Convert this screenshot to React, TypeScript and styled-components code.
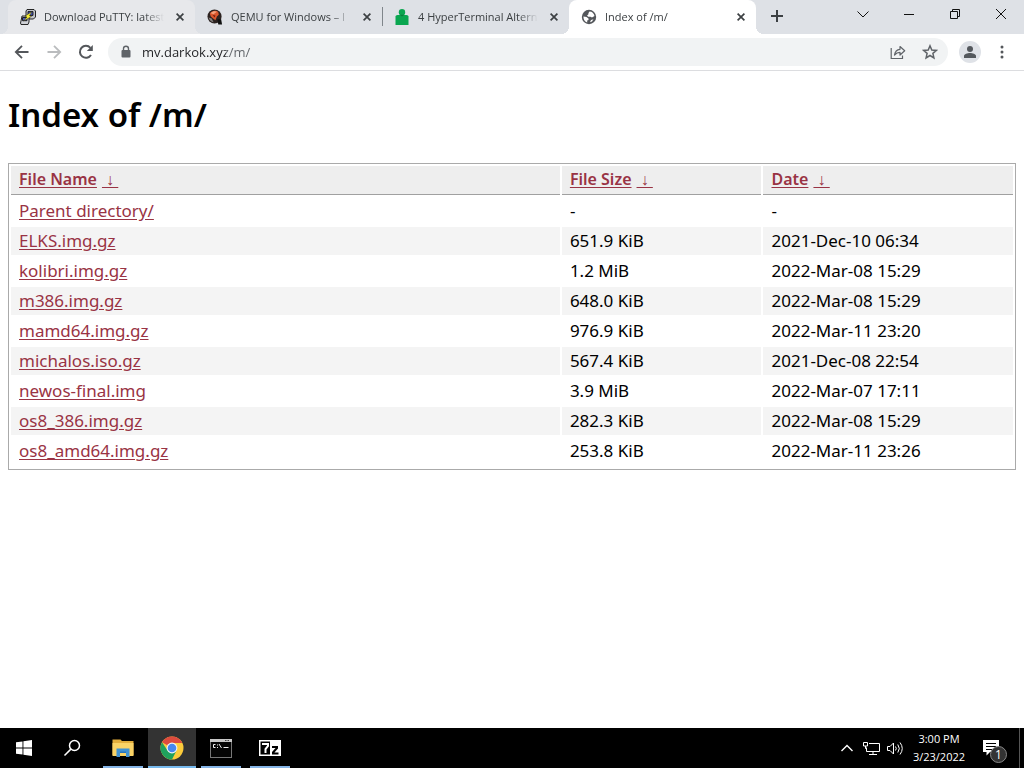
import React from "react";
import styled, { createGlobalStyle, css } from "styled-components";

const GlobalStyle = createGlobalStyle`
  *, *::before, *::after { box-sizing: border-box; }
  body { margin: 0; background: #fff; }
  button { border: 0; padding: 0; background: none; color: inherit; font: inherit; }
  svg { display: block; flex: none; }
`;

const uiFont = css`
  font-family: "Open Sans", "Noto Sans", sans-serif;
`;

const Screen = styled.div`
  display: flex;
  flex-direction: column;
  min-height: 100vh;
`;

const TabStrip = styled.header`
  ${uiFont}
  display: flex;
  height: 34px;
  padding-left: 8px;
  background: #dee1e6;
  color: #3c4043;
`;

const Tab = styled.div<{ $tone?: "active" | "hover"; $divider?: boolean }>`
  position: relative;
  display: flex;
  align-items: center;
  flex: 0 1 187px;
  min-width: 0;
  padding: 0 7px 0 12px;
  border-radius: 8px 8px 0 0;
  font-size: 12px;
  --tone: ${(p) => (p.$tone === "active" ? "#ffffff" : p.$tone === "hover" ? "#e7e8eb" : "transparent")};
  background: var(--tone);

  &::before,
  &::after {
    content: "";
    position: absolute;
    bottom: 0;
    width: 8px;
    height: 8px;
  }
  &::before {
    left: -8px;
    background: radial-gradient(circle at 0 0, transparent 8px, var(--tone) 8px);
  }
  &::after {
    right: -8px;
    background: radial-gradient(circle at 100% 0, transparent 8px, var(--tone) 8px);
  }
  ${(p) =>
    p.$divider &&
    css`
      &::before {
        left: 0;
        bottom: 8px;
        width: 1px;
        height: 19px;
        background: #80868b;
      }
    `}
`;

const TabButton = styled.button`
  display: flex;
  align-items: center;
  gap: 8px;
  flex: 1;
  min-width: 0;
  height: 34px;
  text-align: left;
`;

const TabTitle = styled.span`
  flex: 1;
  min-width: 0;
  overflow: hidden;
  white-space: nowrap;
  font-size: 11px;
  line-height: 16px;
  mask-image: linear-gradient(to right, #000 calc(100% - 20px), transparent);
`;

const IconButton = styled.button<{ $w?: number; $h?: number }>`
  display: flex;
  align-items: center;
  justify-content: center;
  flex: none;
  width: ${(p) => p.$w ?? 32}px;
  height: ${(p) => p.$h ?? 32}px;
`;

const CloseTab = styled(IconButton)`
  margin-left: 8px;
`;

const NewTab = styled(IconButton)`
  margin-left: 5px;
`;

const WindowControls = styled.div`
  display: flex;
  margin-left: auto;
  color: #111;
`;

const Toolbar = styled.nav`
  ${uiFont}
  display: flex;
  align-items: center;
  height: 37px;
  padding: 0 6px;
  border-bottom: 1px solid #dcdde0;
  background: #fff;
  color: #5f6368;
`;

const Omnibox = styled.form`
  display: flex;
  align-items: center;
  flex: 1;
  height: 28px;
  margin: 0 6px;
  padding: 0 2px 0 12px;
  border-radius: 14px;
  background: #f1f3f4;
`;

const Address = styled.input`
  flex: 1;
  min-width: 0;
  height: 28px;
  margin-left: 10px;
  padding: 0;
  border: 0;
  outline: 0;
  font: 13px/20px "Open Sans", "Noto Sans", sans-serif;
  color: transparent;
  background: linear-gradient(to right, #202124 84px, #5f6368 84px);
  background-clip: text;
`;

const Avatar = styled.button`
  display: flex;
  align-items: center;
  justify-content: center;
  width: 22px;
  height: 22px;
  margin: 0 5px;
  border-radius: 50%;
  background: #dfe2e7;
`;

const Page = styled.main`
  flex: 1;
  padding: 22px 8px;
  font-family: "Noto Sans", "Open Sans", sans-serif;
  font-size: 17px;
  color: #000;
`;

const Heading = styled.h1`
  margin: 0 0 26px;
  font-size: 33px;
  font-weight: 600;
  line-height: 44px;
`;

const Listing = styled.table`
  width: 100%;
  padding-bottom: 2px;
  table-layout: fixed;
  border: 1px solid #aaa;
  border-spacing: 2px;
  border-collapse: separate;
  line-height: 28px;
  a {
    color: #993344;
    text-underline-offset: 2px;
  }
`;

const HeadCell = styled.th<{ $width: string }>`
  width: ${(p) => p.$width};
  padding: 0 8px 2px;
  border-bottom: 1px solid #a0a0a0;
  background: #eee;
  text-align: left;
  font-size: 16px;
  font-weight: 600;
  line-height: 26px;
  a + a {
    margin-left: 5px;
    font-weight: 400;
    white-space: pre;
  }
`;

const Row = styled.tr`
  &:nth-child(even) td {
    background: #f4f4f4;
  }
`;

const Cell = styled.td`
  height: 28px;
  padding: 0 8px;
  white-space: nowrap;
`;

const Taskbar = styled.footer`
  ${uiFont}
  display: flex;
  height: 40px;
  background: #000;
  color: #fff;
`;

const TaskButton = styled(IconButton)<{ $running?: boolean; $focused?: boolean }>`
  background: ${(p) =>
    p.$focused
      ? "linear-gradient(#76b9ed, #76b9ed) bottom / 100% 2px no-repeat, #333"
      : p.$running
        ? "linear-gradient(#85b4e6, #85b4e6) bottom / 40px 2px no-repeat"
        : "none"};
`;

const RunningApps = styled.div`
  display: flex;
  gap: 1px;
  margin-left: 3px;
`;

const Tray = styled.div`
  display: flex;
  align-items: center;
  margin-left: auto;
`;

const Clock = styled.time`
  width: 64px;
  font-size: 11px;
  line-height: 18px;
  text-align: center;
`;

const NoticeButton = styled(IconButton)`
  position: relative;
  margin-right: 8px;
`;

const Badge = styled.span`
  position: absolute;
  left: 19px;
  top: 18px;
  width: 17px;
  height: 17px;
  border: 1px solid #888;
  border-radius: 50%;
  background: #333;
  font-size: 12px;
  line-height: 15px;
  text-align: center;
`;

const ShowDesktop = styled.button`
  width: 5px;
  height: 40px;
  border-left: 1px solid #555;
`;

const Cross = () => (
  <svg width="8" height="8" viewBox="0 0 8 8" stroke="#3c4043" strokeWidth="1.7">
    <path d="M.6.6 7.4 7.4M7.4.6.6 7.4" />
  </svg>
);

const PuttyIcon = () => (
  <svg width="16" height="16" viewBox="0 0 16 16" stroke="#111" strokeWidth=".9">
    <path d="M7 .5h7l1.500 1.500v6l-2 2H8L6 8V2z" fill="#c3c5ca" />
    <path d="M8 2.600h5v3.800H8z" fill="#4a58b5" />
    <path d="M2 7h6l1 1v5l-1 2.500H1L.5 14 1 12z" fill="#cfd1d6" />
    <path d="M2.500 8.500h4.500v3.200H2.500z" fill="#4a58b5" />
    <path d="M12 2.500 5 7.200l2 .8L3.500 12 11.500 7.500l-2-.8z" fill="#f7ee31" strokeWidth=".4" />
  </svg>
);

const QemuIcon = () => (
  <svg width="16" height="16" viewBox="0 0 17 17">
    <circle cx="8" cy="8" r="7.500" fill="#2b2220" />
    <path d="M11 11h4l1 5.500h-4z" fill="#111" />
    <path d="M3 5C5 1.500 10 1 12 3.500L12.500 6l-2 2-1.500 4-2.500-2L4 8z" fill="#d9562d" />
    <path d="M4 4.500C6 2 9 2 10.500 3L7 5.500z" fill="#f3a27c" />
    <path d="M6 6.500l3 .5-1 2z" fill="#6d1d10" />
    <path d="M1.500 9c1 3 3 4.500 5.500 5L5 10z" fill="#85807e" />
  </svg>
);

const PersonIcon = () => (
  <svg width="16" height="16" viewBox="0 0 16 16" fill="#0aa650">
    <circle cx="8" cy="3.200" r="3.200" />
    <path d="M3.500 6h9Q14.500 6 14.500 7.500V16H1.500V7.500Q1.500 6 3.500 6z" />
    <path d="M5.500 5.800h5L8 7.600z" fill="#087f3d" />
  </svg>
);

const GlobeIcon = () => (
  <svg width="16" height="16" viewBox="0 0 16 16">
    <circle cx="8" cy="8" r="7.200" fill="#54575b" />
    <path d="M8.500 2.500c2.500 0 4.500 2 5 4.500L11 8.500 9.500 7.800H7.200L6 6.500l1.300-1 .2-1.500z" fill="#fff" />
    <path d="M2.400 7.500 5.500 8l2 1.600v1.300l-1.300.7v2C4 13 2.400 10.500 2.400 7.500z" fill="#fff" />
    <path d="M10 11l2.500-.8-1.500 2.200-2 .9z" fill="#fff" />
  </svg>
);

const ArrowIcon = ({ flip, color }: { flip?: boolean; color: string }) => (
  <svg width="16" height="16" viewBox="0 0 16 16" fill="none" stroke={color} strokeWidth="1.800">
    <path d={flip ? "M1.500 8h12M8 1.800 14.200 8 8 14.200" : "M14.500 8h-12M8 1.800 1.800 8 8 14.200"} />
  </svg>
);

const ReloadIcon = () => (
  <svg width="16" height="16" viewBox="0 0 16 16">
    <path d="M13 11a6 6 0 1 1-.6-7.200" fill="none" stroke="#54575b" strokeWidth="2" />
    <path d="M14.800 1v6H8.800z" fill="#54575b" />
  </svg>
);

const LockIcon = () => (
  <svg width="12" height="14" viewBox="0 0 12 14">
    <rect x="1.500" y="5" width="9" height="7.500" rx="1" fill="#5f6368" />
    <path d="M3.500 5.500V3.800a2.500 2.500 0 0 1 5 0v1.700" fill="none" stroke="#5f6368" strokeWidth="1.400" />
  </svg>
);

const ShareIcon = () => (
  <svg width="16" height="16" viewBox="0 0 16 16" fill="none" stroke="#5f6368" strokeWidth="1.200">
    <path d="M1.200 4v10.500h11.300V11.500" />
    <path d="M4.500 11C5 7.500 7 5.500 10 5.300V2.500l4.700 4.300L10 11V8.300C7.500 8.300 6 9.200 4.500 11z" strokeLinejoin="round" />
  </svg>
);

const StarIcon = () => (
  <svg width="16" height="16" viewBox="0 0 16 16" fill="none" stroke="#5f6368" strokeWidth="1.500">
    <path d="M8 1.800l1.800 4.200 4.600.4-3.500 3 1 4.500L8 11.500l-3.900 2.400 1-4.500-3.500-3 4.600-.4z" />
  </svg>
);

const ProfileIcon = () => (
  <svg width="14" height="14" viewBox="0 0 14 14" fill="#54585d">
    <circle cx="7" cy="4" r="3" />
    <path d="M1 13v-2c0-2 3.500-3 6-3s6 1 6 3v2z" />
  </svg>
);

const MoreIcon = () => (
  <svg width="4" height="16" viewBox="0 0 4 16" fill="#54575b">
    <circle cx="2" cy="3" r="1.500" />
    <circle cx="2" cy="8" r="1.500" />
    <circle cx="2" cy="13" r="1.500" />
  </svg>
);

const WindowIcon = ({ d }: { d: string }) => (
  <svg width="12" height="12" viewBox="0 0 12 12" fill="none" stroke="currentColor">
    <path d={d} />
  </svg>
);

const StartIcon = () => (
  <svg width="16" height="16" viewBox="0 0 16 16" fill="#fff">
    <path d="M0 2.300 6.500 1.400v6.100H0zM7.400 1.300 16 0v7.500H7.400zM0 8.400h6.500v6.200L0 13.700zM7.400 8.400H16V16l-8.600-1.200z" />
  </svg>
);

const SearchIcon = () => (
  <svg width="18" height="18" viewBox="0 0 18 18" fill="none" stroke="#fff" strokeWidth="1.500">
    <circle cx="11.500" cy="6.500" r="5" />
    <path d="M7.900 10.100 1.500 16.500" />
  </svg>
);

const FolderIcon = () => (
  <svg width="22" height="20" viewBox="0 0 22 20">
    <path d="M.5 1.500h8l1.500 1.500H21.500V17H.5z" fill="#e3ae3c" />
    <path d="M.5 5h21v13H.5z" fill="#fad366" />
    <path d="M4.500 10.500h13v8.500h-3.500V15h-6v4H4.500z" fill="#4192d2" />
    <path d="M8 15h6v-1.500H8z" fill="#2874bd" />
  </svg>
);

const ChromeIcon = () => (
  <svg width="24" height="24" viewBox="0 0 24 24">
    <circle cx="12" cy="12" r="11.500" fill="#fccb3b" />
    <path d="M12 12 2.040 6.250A11.500 11.500 0 0 1 21.960 6.250L22 7H12z" fill="#dd4b3e" />
    <path d="M2.040 6.250A11.500 11.500 0 0 0 12 23.500L16.500 14.500 12 12 7.500 14.500z" fill="#1fa15d" />
    <circle cx="12" cy="12" r="5.400" fill="#f2f4f4" />
    <circle cx="12" cy="12" r="4.300" fill="#4687f0" />
  </svg>
);

const ConsoleIcon = () => (
  <svg width="22" height="19" viewBox="0 0 22 19">
    <rect x=".5" y=".5" width="21" height="18" fill="#050505" stroke="#777" />
    <path d="M0 0h22v3H0z" fill="#c8c8c8" />
    <path d="M15 1.500h1.500M17.500 1.500H19" stroke="#444" />
    <path d="M5.500 5.500H3.500v3h2M7.500 5.500v1M7.500 8v1M9 5l2.500 4M13.500 8.500h5" fill="none" stroke="#eee" />
  </svg>
);

const SevenZipIcon = () => (
  <svg width="22" height="16" viewBox="0 0 22 16">
    <path d="M0 0h22v16H0z" fill="#fff" />
    <path d="M1.500 1.500h9.500v13H1.500z" fill="#000" />
    <path d="M3 4h6v2L6.500 9v4" fill="none" stroke="#fff" strokeWidth="2" />
    <path d="M13 7h5v1l-4 4.500v1h5.500" fill="none" stroke="#000" strokeWidth="2" />
  </svg>
);

const TrayUpIcon = () => (
  <svg width="14" height="10" viewBox="0 0 14 10" fill="none" stroke="#fff" strokeWidth="1.400">
    <path d="M1.500 8 7 2.500 12.500 8" />
  </svg>
);

const NetworkIcon = () => (
  <svg width="17" height="15" viewBox="0 0 17 15" fill="none" stroke="#fff">
    <path d="M6 2.500h10.500v8H3.500V6.500M10 10.500v3M6 13.500h8" />
    <path d="M.5 1.500h4v3.500h-4zM2.500 5v2.500h1" />
  </svg>
);

const VolumeIcon = () => (
  <svg width="17" height="15" viewBox="0 0 17 15" fill="none" stroke="#fff">
    <path d="M.5 5.500h2.500L6.500 2v11L3 9.500H.5z" />
    <path d="M8.500 5.500q1.500 2 0 4M10.800 3.500q3 4 0 8M13 1.500q4.500 6 0 12" />
  </svg>
);

const NoticeIcon = () => (
  <svg width="16" height="16" viewBox="0 0 16 16">
    <path d="M0 0h16v12H7l-3.500 3.500V12H0z" fill="#fff" />
    <path d="M3 3.500h10M3 6.500h10M3 9.500h6" stroke="#000" />
  </svg>
);

const tabs = [
  { title: "Download PuTTY: latest", icon: <PuttyIcon />, tone: "hover" as const },
  { title: "QEMU for Windows – I", icon: <QemuIcon /> },
  { title: "4 HyperTerminal Altern", icon: <PersonIcon />, divider: true },
  { title: "Index of /m/", icon: <GlobeIcon />, tone: "active" as const },
];

const columns = [
  { label: "File Name", width: "55%" },
  { label: "File Size", width: "20%" },
  { label: "Date", width: "25%" },
];

const files = [
  ["Parent directory/", "-", "-"],
  ["ELKS.img.gz", "651.9 KiB", "2021-Dec-10 06:34"],
  ["kolibri.img.gz", "1.2 MiB", "2022-Mar-08 15:29"],
  ["m386.img.gz", "648.0 KiB", "2022-Mar-08 15:29"],
  ["mamd64.img.gz", "976.9 KiB", "2022-Mar-11 23:20"],
  ["michalos.iso.gz", "567.4 KiB", "2021-Dec-08 22:54"],
  ["newos-final.img", "3.9 MiB", "2022-Mar-07 17:11"],
  ["os8_386.img.gz", "282.3 KiB", "2022-Mar-08 15:29"],
  ["os8_amd64.img.gz", "253.8 KiB", "2022-Mar-11 23:26"],
];

const windowControls = [
  { label: "Search tabs", d: "M.5 3.500 6 9l5.500-5.500" },
  { label: "Minimize", d: "M1 6.500h10" },
  { label: "Restore", d: "M1.500 3.500h7v7h-7zM3.500 3.500v-2h7v7h-2" },
  { label: "Close", d: "M1 1l10 10M11 1 1 11" },
];

export default function App() {
  return (
    <Screen>
      <GlobalStyle />
      <TabStrip>
        {tabs.map((tab) => (
          <Tab key={tab.title} $tone={tab.tone} $divider={tab.divider}>
            <TabButton>
              {tab.icon}
              <TabTitle>{tab.title}</TabTitle>
            </TabButton>
            <CloseTab $w={16} $h={16} aria-label={`Close ${tab.title}`}>
              <Cross />
            </CloseTab>
          </Tab>
        ))}
        <NewTab aria-label="New tab">
          <svg width="12" height="12" viewBox="0 0 12 12" stroke="#3c4043" strokeWidth="2">
            <path d="M6 0v12M0 6h12" />
          </svg>
        </NewTab>
        <WindowControls>
          {windowControls.map((c) => (
            <IconButton key={c.label} $w={46} $h={28} aria-label={c.label}>
              <WindowIcon d={c.d} />
            </IconButton>
          ))}
        </WindowControls>
      </TabStrip>

      <Toolbar aria-label="Browser toolbar">
        <IconButton aria-label="Back"><ArrowIcon color="#54575b" /></IconButton>
        <IconButton aria-label="Forward" disabled><ArrowIcon flip color="#babcbe" /></IconButton>
        <IconButton aria-label="Reload"><ReloadIcon /></IconButton>
        <Omnibox>
          <LockIcon />
          <Address aria-label="Address" defaultValue="mv.darkok.xyz/m/" />
          <IconButton type="button" aria-label="Share"><ShareIcon /></IconButton>
          <IconButton type="button" aria-label="Bookmark"><StarIcon /></IconButton>
        </Omnibox>
        <Avatar aria-label="Profile"><ProfileIcon /></Avatar>
        <IconButton aria-label="Menu"><MoreIcon /></IconButton>
      </Toolbar>

      <Page>
        <Heading>Index of /m/</Heading>
        <Listing>
          <thead>
            <tr>
              {columns.map((c) => (
                <HeadCell key={c.label} $width={c.width}>
                  <a href="#sort">{c.label}</a>
                  <a href="#reverse" aria-label={`Sort ${c.label} descending`}>{"\u00a0↓\u00a0"}</a>
                </HeadCell>
              ))}
            </tr>
          </thead>
          <tbody>
            {files.map(([name, size, date]) => (
              <Row key={name}>
                <Cell><a href={`#${name}`}>{name}</a></Cell>
                <Cell>{size}</Cell>
                <Cell>{date}</Cell>
              </Row>
            ))}
          </tbody>
        </Listing>
      </Page>

      <Taskbar>
        <TaskButton $w={48} $h={40} aria-label="Start"><StartIcon /></TaskButton>
        <TaskButton $w={48} $h={40} aria-label="Search"><SearchIcon /></TaskButton>
        <RunningApps>
          <TaskButton $w={48} $h={40} $running aria-label="File Explorer"><FolderIcon /></TaskButton>
          <TaskButton $w={48} $h={40} $focused aria-label="Chrome"><ChromeIcon /></TaskButton>
          <TaskButton $w={48} $h={40} $running aria-label="Command Prompt"><ConsoleIcon /></TaskButton>
          <TaskButton $w={48} $h={40} $running aria-label="7-Zip"><SevenZipIcon /></TaskButton>
        </RunningApps>
        <Tray>
          <IconButton $w={24} $h={40} aria-label="Show hidden icons"><TrayUpIcon /></IconButton>
          <IconButton $w={24} $h={40} aria-label="Network"><NetworkIcon /></IconButton>
          <IconButton $w={24} $h={40} aria-label="Volume"><VolumeIcon /></IconButton>
          <Clock>3:00 PM<br />3/23/2022</Clock>
          <NoticeButton $w={40} $h={40} aria-label="Notifications">
            <NoticeIcon />
            <Badge>1</Badge>
          </NoticeButton>
          <ShowDesktop aria-label="Show desktop" />
        </Tray>
      </Taskbar>
    </Screen>
  );
}
